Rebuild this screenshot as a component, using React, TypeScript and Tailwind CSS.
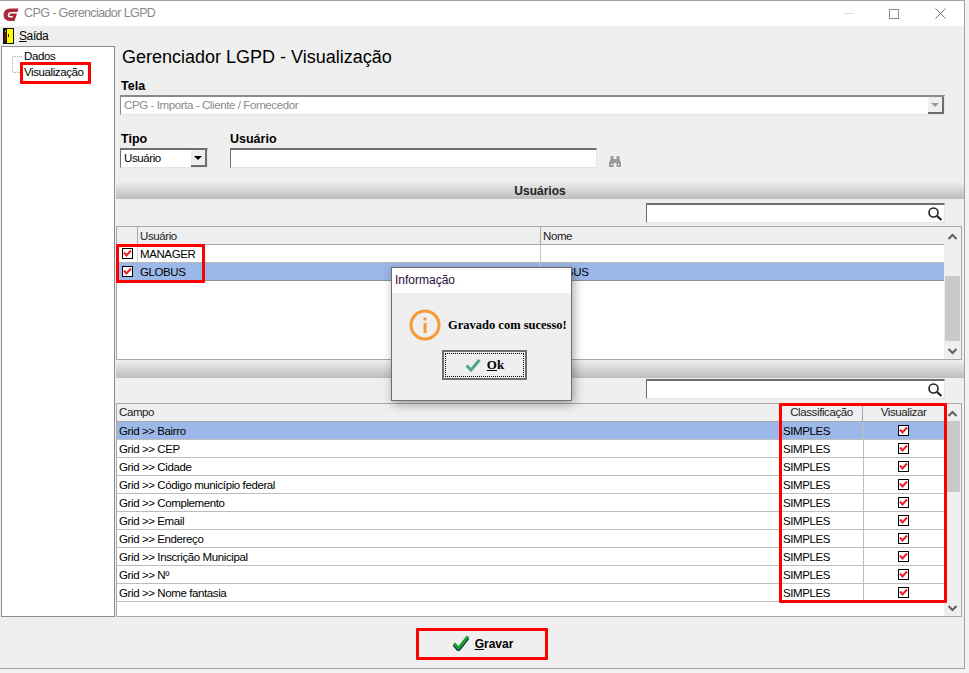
const fields = [
  "Grid >> Bairro",
  "Grid >> CEP",
  "Grid >> Cidade",
  "Grid >> Código município federal",
  "Grid >> Complemento",
  "Grid >> Email",
  "Grid >> Endereço",
  "Grid >> Inscrição Municipal",
  "Grid >> Nº",
  "Grid >> Nome fantasia",
];

function Check() {
  return (
    <span className="flex h-[11px] w-[11px] items-center justify-center border border-black bg-white">
      <svg width="9" height="9" viewBox="0 0 9 9">
        <path d="M1 3.5 L3.5 6.5 L8 1.5" fill="none" stroke="#ee1c25" strokeWidth="2" />
      </svg>
    </span>
  );
}

function Lens() {
  return (
    <svg width="16" height="16" viewBox="0 0 16 16" className="shrink-0">
      <circle cx="6.5" cy="6.5" r="4.5" fill="none" stroke="#222" strokeWidth="1.6" />
      <path d="M10 10 L14.5 14" stroke="#222" strokeWidth="2.2" />
    </svg>
  );
}

function ScrollBar({ thumbTop, thumbHeight }: { thumbTop: number; thumbHeight: number }) {
  return (
    <div className="relative flex w-[17px] shrink-0 flex-col justify-between bg-[#efefef]">
      <svg width="15" height="15" viewBox="0 0 15 15" className="mx-auto mt-[3px]">
        <path d="M3.5 9 L7.5 5 L11.5 9" fill="none" stroke="#606060" strokeWidth="2" />
      </svg>
      <div
        className="absolute left-px w-[15px] bg-[#c9c9c9]"
        style={{ top: thumbTop, height: thumbHeight }}
      />
      <svg width="15" height="15" viewBox="0 0 15 15" className="mx-auto mb-px">
        <path d="M3.5 6 L7.5 10 L11.5 6" fill="none" stroke="#606060" strokeWidth="2" />
      </svg>
    </div>
  );
}

function Band({ children }: { children?: React.ReactNode }) {
  return (
    <div className="flex h-[18px] items-center justify-center bg-gradient-to-b from-[#f0f0f0] to-[#bdbdbd] pt-[2px] text-[12px] font-bold tracking-normal text-[#222]">
      {children}
    </div>
  );
}

function SearchBox() {
  return (
    <div className="flex h-[20px] items-center justify-end border border-t-2 border-[#e4e4e4] border-t-[#6e6e6e] border-l-[#6e6e6e] bg-white pr-px">
      <Lens />
    </div>
  );
}

export default function App() {
  return (
    <div className="relative h-[673px] w-[969px] overflow-hidden bg-[#f3f3f3] font-['Liberation_Sans',sans-serif] text-[11.5px] tracking-[-0.4px] text-black">
      <div className="flex h-[669px] w-[965px] flex-col border-t border-r border-b border-[#a3a3a3] bg-[#efefef]">
        <div className="flex h-[25px] items-center bg-white pl-[3px]">
          <svg width="16" height="16" viewBox="0 0 16 16">
            <path d="M15.5 2.5 H7.5 Q1 2.5 0.5 8.5 Q0.5 15 6.5 15 H11.5 L14 7.5 H7 L6.3 10 H10 L9.5 11.5 H7 Q4.5 11.5 4.8 8.8 Q5.2 6 8 6 H14.5 Z" fill="#a82a3c" />
          </svg>
          <span className="ml-[5px] text-[12.5px] tracking-[-0.6px] text-[#8a8a8a]">CPG - Gerenciador LGPD</span>
          <div className="ml-auto flex items-center">
            <span className="mr-[35px] h-px w-[10px] bg-[#dcdcdc]" />
            <span className="mr-[36px] h-[10px] w-[10px] border border-[#8a8a8a]" />
            <svg width="11" height="11" viewBox="0 0 11 11" className="mr-[18px]">
              <path d="M0.5 0.5 L10.5 10.5 M10.5 0.5 L0.5 10.5" stroke="#777" strokeWidth="1" />
            </svg>
          </div>
        </div>
        <div className="flex h-[20px] items-center pl-[3px]">
          <svg width="11" height="16" viewBox="0 0 11 16">
            <rect width="11" height="16" fill="#111" />
            <rect x="4" y="1" width="6" height="14" fill="#ffff00" />
            <path d="M2.5 2 V9 L1.5 13" fill="none" stroke="#8a1a1a" strokeWidth="1.5" />
            <rect x="2" y="2" width="1" height="2" fill="#38c8c8" />
            <rect x="5" y="6" width="1" height="3" fill="#111" />
          </svg>
          <span className="ml-[5px] text-[12px]">
            <span className="underline">S</span>aída
          </span>
        </div>

        <div className="flex h-[571px]">
          <div className="relative ml-px w-[114px] border border-[#8c8c8c] bg-white">
            <svg width="12" height="26" viewBox="0 0 12 26" className="absolute top-[7px] left-[10px]">
              <path d="M0.5 2.5 H11 M0.5 2.5 V18.5 H11" fill="none" stroke="#a8a8a8" strokeDasharray="1 1" shapeRendering="crispEdges" />
            </svg>
            <div className="pt-[1px] pl-[22px] leading-[16px]">Dados</div>
            <div className="pl-[22px] leading-[16px]">Visualização</div>
          </div>

          <div className="flex min-w-0 flex-1 flex-col pl-px">
            <div className="pt-[1px] pl-[6px] text-[18px] leading-[20px] tracking-normal">
              Gerenciador LGPD - Visualização
            </div>
            <div className="pt-[12px] pl-[5px] text-[12.5px] leading-[14px] font-bold tracking-normal">Tela</div>
            <div className="mt-[2px] mr-[19px] ml-[4px] flex h-[20px] items-center justify-between border border-t-2 border-[#e4e4e4] border-t-[#8a8a8a] border-l-[#8a8a8a] bg-white pl-[3px] text-[#8a8a8a]">
              CPG - Importa - Cliente / Fornecedor
              <span className="flex h-[17px] w-[16px] items-center justify-center border-r-2 border-b-2 border-[#6e6e6e] bg-[#efefef]">
                <span className="h-0 w-0 border-x-[4px] border-t-[4px] border-x-transparent border-t-[#9a9a9a]" />
              </span>
            </div>

            <div className="mt-[17px] flex pl-[4px]">
              <div className="w-[110px]">
                <div className="pl-px text-[12.5px] leading-[14px] font-bold tracking-normal">Tipo</div>
                <div className="mt-[2px] flex h-[20px] w-[88px] items-center justify-between border border-t-2 border-[#e4e4e4] border-t-[#6e6e6e] border-l-[#6e6e6e] bg-white pl-[3px]">
                  Usuário
                  <span className="flex h-[17px] w-[16px] items-center justify-center border-r-2 border-b-2 border-[#6e6e6e] bg-[#efefef]">
                    <span className="h-0 w-0 border-x-[4px] border-t-[4px] border-x-transparent border-t-black" />
                  </span>
                </div>
              </div>
              <div className="w-[367px]">
                <div className="text-[12.5px] leading-[14px] font-bold tracking-normal">Usuário</div>
                <div className="mt-[2px] h-[20px] border border-t-2 border-[#e4e4e4] border-t-[#6e6e6e] border-l-[#6e6e6e] bg-white" />
              </div>
              <svg width="12" height="11" viewBox="0 0 12 11" className="mt-[24px] ml-[12px]">
                <path d="M1.5 0 H4.5 V3 H7.5 V0 H10.5 V3 L12 7 V11 H7.5 V7 H4.5 V11 H0 V7 L1.5 3 Z" fill="#9a9a9a" />
                <rect x="2" y="8" width="1.2" height="1.2" fill="#fff" />
                <rect x="9" y="8" width="1.2" height="1.2" fill="#fff" />
              </svg>
            </div>

            <div className="mt-[13px]">
              <Band>Usuários</Band>
            </div>
            <div className="mt-[4px] mr-[19px] ml-[530px]">
              <SearchBox />
            </div>
            <div className="mt-[3px] mr-[2px] flex h-[134px] border border-[#a8a8a8] bg-white">
              <div className="min-w-0 flex-1">
                <div className="flex h-[18px] border-b border-[#a8a8a8] bg-[#efefef] leading-[19px] text-[#222]">
                  <div className="w-[21px] border-r border-[#a8a8a8]" />
                  <div className="w-[403px] border-r border-[#a8a8a8] pl-[2px]">Usuário</div>
                  <div className="pl-[2px]">Nome</div>
                </div>
                <div className="flex h-[18px] border-b border-[#b8b8b8]">
                  <div className="flex w-[21px] items-center justify-center border-r border-[#cfcfcf]">
                    <Check />
                  </div>
                  <div className="w-[403px] border-r border-[#c8c8c8] pl-[2px] leading-[19px]">MANAGER</div>
                </div>
                <div className="flex h-[18px] border-b border-[#8f8f8f] bg-[#9cb8e8]">
                  <div className="flex w-[21px] items-center justify-center">
                    <Check />
                  </div>
                  <div className="w-[403px] border-r border-[#c8c8c8] pl-[2px] leading-[19px]">GLOBUS</div>
                  <div className="pl-[2px] leading-[19px]">GLOBUS</div>
                </div>
              </div>
              <ScrollBar thumbTop={49} thumbHeight={65} />
            </div>

            <div>
              <Band>Campo</Band>
            </div>
            <div className="mt-[1px] mr-[19px] ml-[530px]">
              <SearchBox />
            </div>
            <div className="mt-[4px] mr-[2px] flex min-h-0 flex-1 border border-[#a8a8a8] bg-white">
              <div className="min-w-0 flex-1">
                <div className="flex h-[18px] border-b border-[#a8a8a8] bg-[#efefef] leading-[17px] text-[#222]">
                  <div className="w-[664px] border-r border-[#a8a8a8] pl-[2px]">Campo</div>
                  <div className="w-[82px] border-r border-[#a8a8a8] text-center">Classificação</div>
                  <div className="flex-1 text-center">Visualizar</div>
                </div>
                {fields.map((field, i) => (
                  <div
                    key={field}
                    className={`flex h-[18px] border-b border-[#bdbdbd] leading-[19px] ${i === 0 ? "bg-[#9cb8e8]" : ""}`}
                  >
                    <div className="w-[664px] pl-[2px]">{field}</div>
                    <div className="w-[82px] border-l border-[#bdbdbd] pl-[1px]">SIMPLES</div>
                    <div className="flex flex-1 items-center justify-center border-l border-[#bdbdbd] pr-[2px]">
                      <Check />
                    </div>
                  </div>
                ))}
              </div>
              <ScrollBar thumbTop={17} thumbHeight={71} />
            </div>
          </div>
        </div>

        <div className="flex flex-1 items-start pt-[11px] pl-[417px]">
          <button className="flex h-[32px] w-[130px] items-center justify-center gap-[5px] border-r-2 border-b-2 border-[#6e6e6e] bg-[#efefef] pl-[3px] text-[12px] font-bold tracking-normal">
            <svg width="18" height="16" viewBox="0 0 18 16">
              <path d="M2 10 L6.5 15 L16 3" fill="none" stroke="#0a1a50" strokeWidth="3" />
              <path d="M2 8.5 L6.5 13.5 L16 1.5" fill="none" stroke="#15a02a" strokeWidth="3" />
            </svg>
            <span className="pt-[2px]">
              <span className="underline">G</span>ravar
            </span>
          </button>
        </div>
      </div>

      {/* anotacoes vermelhas do print */}
      <div className="absolute top-[62px] left-[20px] h-[22px] w-[71px] rounded-[1px] border-[3px] border-[#ff0000]" />
      <div className="absolute top-[244px] left-[116px] h-[39px] w-[89px] rounded-[1px] border-[3px] border-[#ff0000]" />
      <div className="absolute top-[403px] left-[779px] h-[200px] w-[168px] rounded-[1px] border-[3px] border-[#ff0000]" />
      <div className="absolute top-[628px] left-[416px] h-[32px] w-[132px] rounded-[1px] border-[3px] border-[#ff0000]" />

      <div className="absolute top-[267px] left-[391px] h-[134px] w-[181px] border border-[#6e6e6e] bg-[#efefef] tracking-normal shadow-[2px_3px_10px_rgba(0,0,0,0.35)]">
        <div className="flex h-[25px] items-center bg-white pb-[2px] pl-[3px] text-[12px] text-[#2a0a3a]">Informação</div>
        <div className="mt-[16px] flex items-center pl-[17px]">
          <svg width="32" height="32" viewBox="0 0 32 32">
            <circle cx="16" cy="16" r="14" fill="none" stroke="#f79a34" strokeWidth="3" />
            <rect x="14.5" y="14" width="3" height="10" fill="#f79a34" />
            <rect x="14.5" y="8.5" width="3" height="3" fill="#f79a34" />
          </svg>
          <span className="ml-[7px] font-['Liberation_Serif',serif] text-[12.5px] font-bold whitespace-nowrap">
            Gravado com sucesso!
          </span>
        </div>
        <button className="mt-[9px] ml-[50px] flex h-[30px] w-[85px] items-center justify-center border-2 border-[#6e6e6e] bg-[#efefef] p-px">
          <span className="flex h-full w-full items-center justify-center gap-[6px] border border-dotted border-black font-['Liberation_Serif',serif] text-[13px] font-bold">
            <svg width="16" height="14" viewBox="0 0 16 14">
              <path d="M1.5 7.5 L6 12 L14.5 2" fill="none" stroke="#4fa585" strokeWidth="3" />
            </svg>
            <span>
              <span className="underline">O</span>k
            </span>
          </span>
        </button>
      </div>
    </div>
  );
}
